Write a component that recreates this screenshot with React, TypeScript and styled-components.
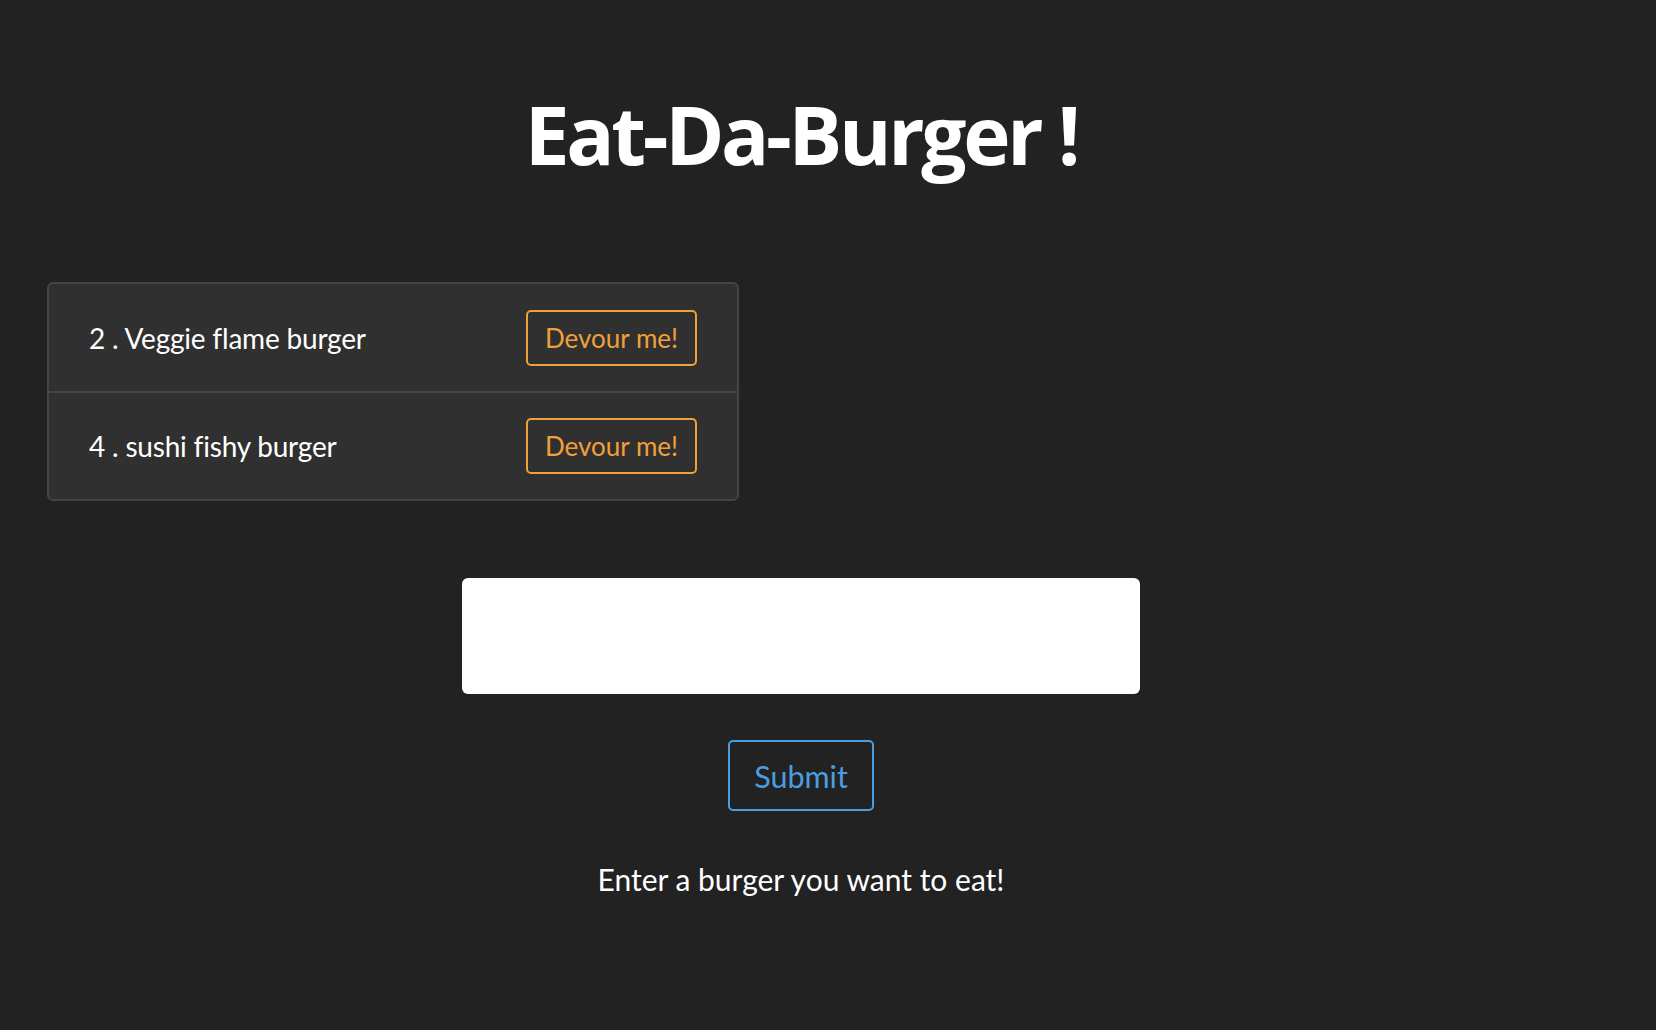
import React from "react";
import styled, { createGlobalStyle } from "styled-components";

const Global = createGlobalStyle`
  html, body { margin: 0; padding: 0; background: #222222; }
  body { font-family: Lato, "Open Sans", sans-serif; color: #ffffff; }
`;

const Page = styled.div`
  min-height: 1030px;
  padding: 0 54px 0 0;
  box-sizing: border-box;
  display: flex;
  flex-direction: column;
`;

const Title = styled.h1`
  margin: 86px 0 0 0;
  text-align: center;
  font-family: "Open Sans", "Noto Sans", sans-serif;
  font-weight: 700;
  font-size: 80px;
  line-height: 96px;
  letter-spacing: -3.3px;
  color: #ffffff;
`;

const List = styled.ul`
  list-style: none;
  margin: 100px 0 0 47px;
  padding: 0;
  width: 692px;
  border: 2px solid #444444;
  border-radius: 6px;
  background: #303030;
  box-sizing: border-box;
`;

const Item = styled.li<{ $last?: boolean }>`
  display: flex;
  align-items: center;
  justify-content: space-between;
  height: ${(p) => (p.$last ? 106 : 107)}px;
  padding: 0 40px;
  border-bottom: ${(p) => (p.$last ? "none" : "2px solid #444444")};
`;

const Name = styled.span`
  color: #ffffff;
  font-size: 28px;
  letter-spacing: -0.2px;
`;

const OutlineButton = styled.button<{ $color: string; $w: number; $h: number; $size: number }>`
  background: transparent;
  border: 2px solid ${(p) => p.$color};
  color: ${(p) => p.$color};
  border-radius: 5px;
  width: ${(p) => p.$w}px;
  height: ${(p) => p.$h}px;
  font-family: Lato, sans-serif;
  font-size: ${(p) => p.$size}px;
  padding: 0;
  cursor: pointer;
`;

const Form = styled.form`
  display: flex;
  flex-direction: column;
  align-items: center;
  margin-top: 77px;
`;

const Input = styled.input`
  width: 678px;
  height: 116px;
  border: none;
  border-radius: 6px;
  background: #ffffff;
  box-sizing: border-box;
  padding: 0 20px;
  font-size: 24px;
  font-family: Lato, sans-serif;
  outline: none;
`;

const SubmitWrap = styled.div`
  margin-top: 46px;
`;

const Hint = styled.p`
  margin: 50px 0 0 0;
  font-size: 30px;
  color: #ffffff;
  text-align: center;
`;

const burgers = [
  { id: 2, name: "Veggie flame burger" },
  { id: 4, name: "sushi fishy burger" },
];

export default function App() {
  return (
    <>
      <Global />
      <Page>
        <Title>Eat-Da-Burger !</Title>
        <List>
          {burgers.map((b, i) => (
            <Item key={b.id} $last={i === burgers.length - 1}>
              <Name>
                {b.id} . {b.name}
              </Name>
              <OutlineButton $color="#f0a03a" $w={171} $h={56} $size={26}>
                Devour me!
              </OutlineButton>
            </Item>
          ))}
        </List>
        <Form onSubmit={(e) => e.preventDefault()}>
          <Input type="text" />
          <SubmitWrap>
            <OutlineButton type="submit" $color="#4a9ee0" $w={146} $h={71} $size={30.5}>
              Submit
            </OutlineButton>
          </SubmitWrap>
          <Hint>Enter a burger you want to eat!</Hint>
        </Form>
      </Page>
    </>
  );
}
